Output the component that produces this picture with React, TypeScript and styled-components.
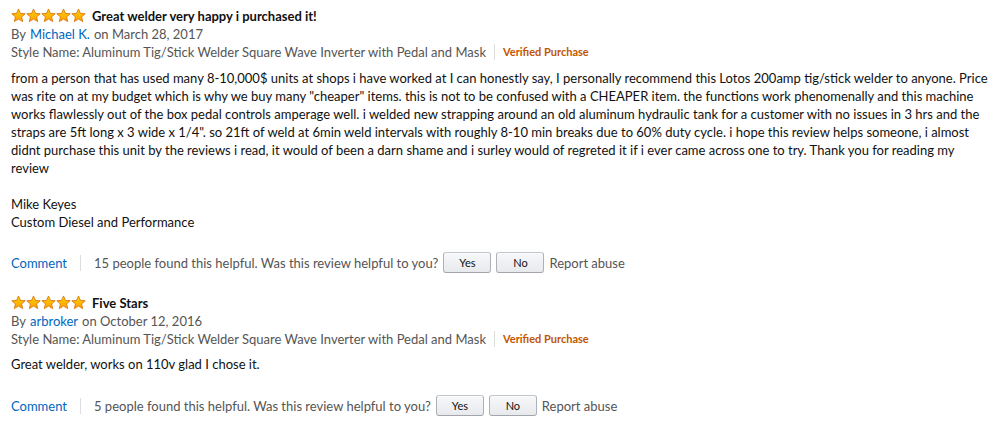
import styled, { createGlobalStyle } from "styled-components";

const Global = createGlobalStyle`
  body {
    margin: 0;
    background: #fff;
    font-family: Lato, "Noto Sans", Arial, sans-serif;
    color: #111;
  }
`;

const Page = styled.div`
  padding: 6px 0 0 11px;
  width: 978px;
`;

const Review = styled.div`
  display: flex;
  flex-direction: column;
  margin-bottom: 20px;
`;

const TitleRow = styled.div`
  display: flex;
  align-items: center;
  gap: 6px;
  height: 19px;
`;

const Title = styled.span`
  font-weight: 700;
  font-size: 13px;
  color: #111;
`;

const Meta = styled.div`
  font-size: 13px;
  line-height: 18px;
  color: #555;
  display: flex;
  align-items: center;
`;

const Link = styled.a`
  color: #0066c0;
  text-decoration: none;
  margin: 0 4px;
`;

const Divider = styled.span`
  display: inline-block;
  width: 1px;
  height: 16px;
  background: #ddd;
  margin: 0 ${(p: { $gap?: number }) => p.$gap ?? 8}px;
`;

const Verified = styled.span`
  color: #c45500;
  font-weight: 700;
  font-size: 11px;
`;

const Body = styled.div`
  font-size: 13px;
  line-height: 18px;
  color: #111;
  margin-top: ${(p: { $top: number }) => p.$top}px;
`;

const Para = styled.p`
  margin: 0 0 ${(p: { $after?: number }) => p.$after ?? 0}px;
`;

const Actions = styled.div`
  display: flex;
  align-items: center;
  margin-top: ${(p: { $top: number }) => p.$top}px;
  font-size: 13px;
  color: #555;
`;

const CommentLink = styled.a`
  color: #0066c0;
  text-decoration: none;
`;

const Button = styled.button`
  font-family: inherit;
  font-size: 11px;
  color: #111;
  height: 21px;
  width: 48px;
  margin-left: 5px;
  padding: 0;
  border: 1px solid #adb1b8;
  border-top-color: #c3c6cb;
  border-bottom-color: #a2a6ac;
  border-radius: 3px;
  background: linear-gradient(to bottom, #f7f8fa, #e7e9ec);
  box-shadow: 0 1px 0 rgba(255, 255, 255, 0.6) inset;
`;

const Report = styled.span`
  margin-left: 5px;
`;

const Star = () => (
  <svg width="15" height="15" viewBox="0 0 24 24">
    <defs>
      <linearGradient id="sg" x1="0" y1="0" x2="0" y2="1">
        <stop offset="0" stopColor="#ffce00" />
        <stop offset="1" stopColor="#ffa200" />
      </linearGradient>
    </defs>
    <path
      d="M12 1.5l3.1 7.1 7.6.6-5.8 5 1.8 7.5L12 17.7l-6.7 4 1.8-7.5-5.8-5 7.6-.6z"
      fill="url(#sg)"
      stroke="#d9760f"
      strokeWidth="1.4"
      strokeLinejoin="round"
    />
  </svg>
);

const Stars = styled.span`
  display: inline-flex;
`;

const FiveStars = () => (
  <Stars>
    {[0, 1, 2, 3, 4].map((i) => (
      <Star key={i} />
    ))}
  </Stars>
);

type ReviewProps = {
  title: string;
  author: string;
  date: string;
  helpful: string;
  children: React.ReactNode;
  bodyTop: number;
  actionsTop: number;
};

const ReviewBlock = ({ title, author, date, helpful, children, bodyTop, actionsTop }: ReviewProps) => (
  <Review>
    <TitleRow>
      <FiveStars />
      <Title>{title}</Title>
    </TitleRow>
    <Meta>
      By<Link href="#">{author}</Link>on {date}
    </Meta>
    <Meta>
      Style Name: Aluminum Tig/Stick Welder Square Wave Inverter with Pedal and Mask
      <Divider />
      <Verified>Verified Purchase</Verified>
    </Meta>
    <Body $top={bodyTop}>{children}</Body>
    <Actions $top={actionsTop}>
      <CommentLink href="#">Comment</CommentLink>
      <Divider $gap={13} />
      {helpful} people found this helpful. Was this review helpful to you?
      <Button>Yes</Button>
      <Button>No</Button>
      <Report>Report abuse</Report>
    </Actions>
  </Review>
);

export default function App() {
  return (
    <Page>
      <Global />
      <ReviewBlock
        title="Great welder very happy i purchased it!"
        author="Michael K."
        date="March 28, 2017"
        helpful="15"
        bodyTop={8}
        actionsTop={21}
      >
        <Para $after={18}>
          from a person that has used many 8-10,000$ units at shops i have worked at I can honestly say, I
          personally recommend this Lotos 200amp tig/stick welder to anyone. Price was rite on at my budget
          which is why we buy many "cheaper" items. this is not to be confused with a CHEAPER item. the
          functions work phenomenally and this machine works flawlessly out of the box pedal controls
          amperage well. i welded new strapping around an old aluminum hydraulic tank for a customer with
          no issues in 3 hrs and the straps are 5ft long x 3 wide x 1/4". so 21ft of weld at 6min weld
          intervals with roughly 8-10 min breaks due to 60% duty cycle. i hope this review helps someone, i
          almost didnt purchase this unit by the reviews i read, it would of been a darn shame and i surley
          would of regreted it if i ever came across one to try. Thank you for reading my review
        </Para>
        <Para>Mike Keyes</Para>
        <Para>Custom Diesel and Performance</Para>
      </ReviewBlock>
      <ReviewBlock
        title="Five Stars"
        author="arbroker"
        date="October 12, 2016"
        helpful="5"
        bodyTop={7}
        actionsTop={22}
      >
        <Para>Great welder, works on 110v glad I chose it.</Para>
      </ReviewBlock>
    </Page>
  );
}
